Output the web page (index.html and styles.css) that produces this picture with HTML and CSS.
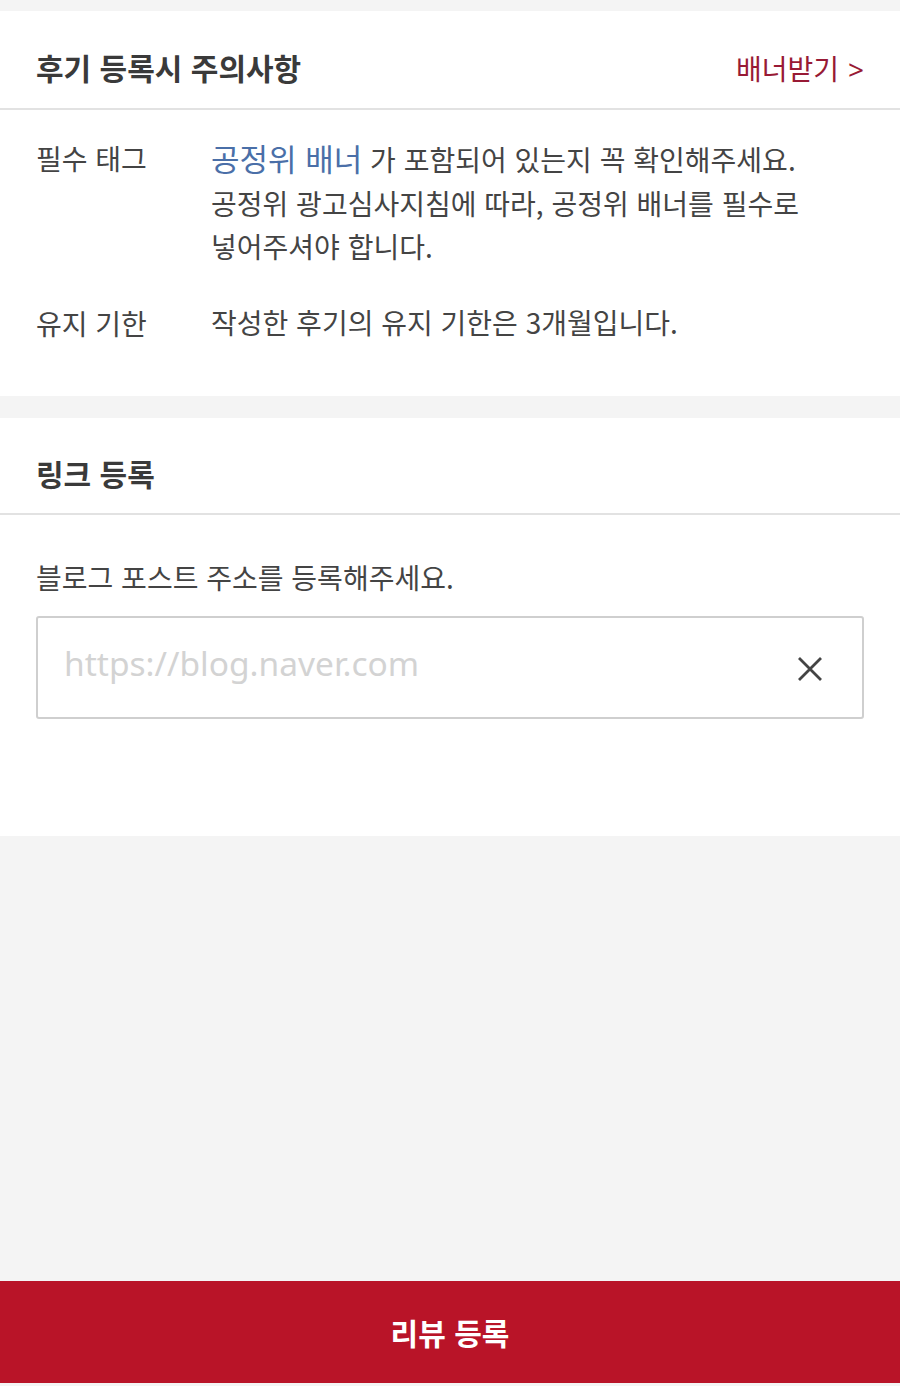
FILE: index.html
```html
<!DOCTYPE html>
<html lang="ko">
<head>
<meta charset="utf-8">
<title>후기 등록</title>
<link rel="stylesheet" href="styles.css">
</head>
<body>
<div class="page">
  <div class="gap-top"></div>
  <section class="card">
    <div class="card-head head-notice">
      <h2 class="title">후기 등록시 주의사항</h2>
      <a class="banner-link" href="#">배너받기 <span class="chev">&gt;</span></a>
    </div>
    <div class="card-body notice">
      <div class="row">
        <div class="label">필수 태그</div>
        <div class="desc"><span class="hl">공정위 배너</span> 가 포함되어 있는지 꼭 확인해주세요.<br>공정위 광고심사지침에 따라, 공정위 배너를 필수로<br>넣어주셔야 합니다.</div>
      </div>
      <div class="row">
        <div class="label">유지 기한</div>
        <div class="desc">작성한 후기의 유지 기한은 3개월입니다.</div>
      </div>
    </div>
  </section>
  <div class="gap-mid"></div>
  <section class="card link-card">
    <div class="card-head head-link">
      <h2 class="title">링크 등록</h2>
    </div>
    <div class="card-body link-body">
      <p class="guide">블로그 포스트 주소를 등록해주세요.</p>
      <div class="input-box">
        <span class="placeholder">https://blog.naver.com</span>
        <svg class="clear" viewBox="0 0 26 26" width="26" height="26" aria-hidden="true">
          <path d="M2 2 L24 24 M24 2 L2 24" stroke="#444" stroke-width="2.8" fill="none"/>
        </svg>
      </div>
    </div>
  </section>
  <div class="filler"></div>
  <button class="submit">리뷰 등록</button>
</div>
</body>
</html>
```
FILE: styles.css
```css
html, body {
  margin: 0;
  padding: 0;
}
body {
  background: #f4f4f4;
  font-family: "Noto Sans CJK KR", "Noto Sans", sans-serif;
  color: #444;
}
.page {
  display: flex;
  flex-direction: column;
  height: 1386px;
}
.gap-top {
  height: 11px;
  flex: none;
}
.gap-mid {
  height: 22px;
  flex: none;
}
.card {
  background: #fff;
  flex: none;
}
.card-head {
  box-sizing: border-box;
  padding: 15px 36px 0;
  display: flex;
  align-items: center;
  justify-content: space-between;
  border-bottom: 2px solid #e2e2e2;
}
.head-notice {
  height: 99px;
}
.head-link {
  height: 97px;
}
.title {
  margin: 0;
  font-size: 30px;
  font-weight: 700;
  color: #3a3a3a;
}
.banner-link {
  color: #981a35;
  text-decoration: none;
  font-size: 28px;
  transform: translateY(1px);
}
.chev {
  font-family: "Noto Sans", sans-serif;
  margin-left: 1px;
}
.notice {
  padding: 26px 36px 51px;
  display: flex;
  flex-direction: column;
  gap: 32px;
}
.row {
  display: flex;
}
.label {
  width: 175px;
  flex: none;
  font-size: 28px;
  line-height: 44px;
  color: #444;
}
.desc {
  font-size: 28px;
  line-height: 43.5px;
  color: #444;
}
.hl {
  color: #4a6fa8;
  font-size: 31px;
}
.link-card {
  height: 418px;
}
.link-body {
  padding: 40px 36px 0;
}
.guide {
  margin: 0;
  font-size: 28px;
  line-height: 44px;
  color: #444;
}
.input-box {
  margin-top: 17px;
  height: 103px;
  box-sizing: border-box;
  border: 2px solid #cfcfcf;
  border-radius: 3px;
  display: flex;
  align-items: center;
  justify-content: space-between;
  padding: 0 39px 0 26px;
}
.placeholder {
  font-family: "Noto Sans", sans-serif;
  font-size: 33.5px;
  color: #d3d3d3;
  transform: translateY(-4px);
}
.clear {
  flex: none;
  transform: translateY(2px);
}
.filler {
  flex: 1;
}
.submit {
  flex: none;
  height: 102px;
  margin-bottom: 3px;
  border: none;
  background: #b91428;
  color: #fff;
  font-family: "Noto Sans CJK KR", "Noto Sans", sans-serif;
  font-size: 30px;
  font-weight: 700;
  padding: 0;
}
```
